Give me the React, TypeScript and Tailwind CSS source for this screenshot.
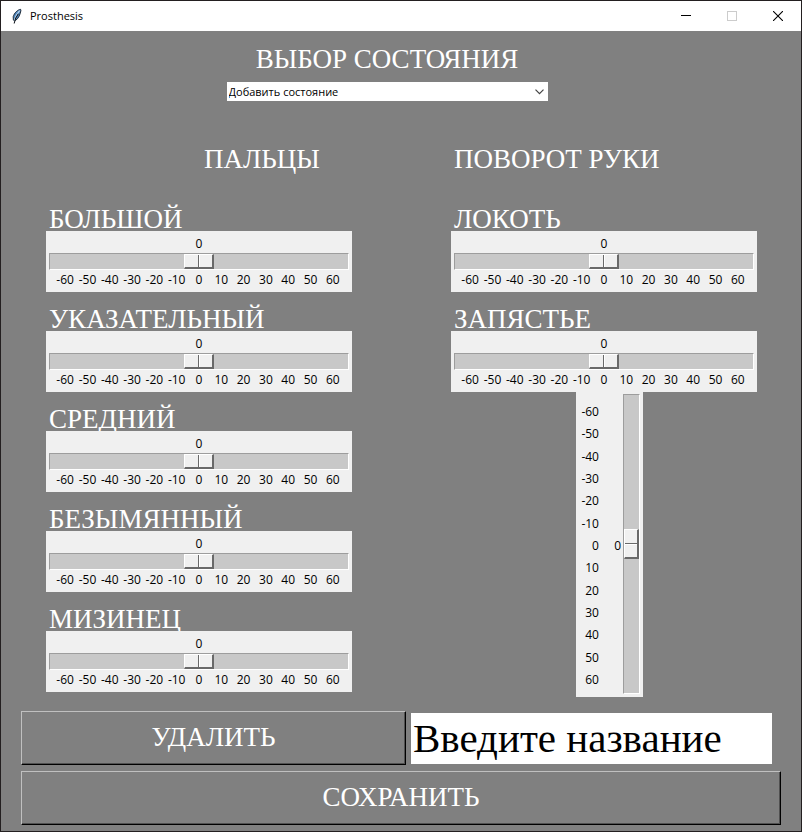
import { useState } from "react";

const TICKS = [-60, -50, -40, -30, -20, -10, 0, 10, 20, 30, 40, 50, 60];
const LIMIT = 60;

const UI_FONT = "font-['Open_Sans','Noto_Sans',sans-serif]";
const TRACK =
  "block appearance-none border border-t-[#9d9d9d] border-l-[#9d9d9d] border-r-white border-b-white bg-[#c8c8c8] outline-none";
const THUMB =
  "[&::-webkit-slider-thumb]:appearance-none [&::-webkit-slider-thumb]:border-t-1 [&::-webkit-slider-thumb]:border-l-1 [&::-webkit-slider-thumb]:border-r-2 [&::-webkit-slider-thumb]:border-b-2 [&::-webkit-slider-thumb]:border-t-white [&::-webkit-slider-thumb]:border-l-white [&::-webkit-slider-thumb]:border-r-[#696969] [&::-webkit-slider-thumb]:border-b-[#696969] [&::-webkit-slider-thumb]:bg-[#f0f0f0]";

function Scale({ id, label }: { id: string; label: string }) {
  const [value, setValue] = useState(0);
  return (
    <div className="flex flex-col">
      <label htmlFor={id} className="pl-[3px] text-[27px] leading-6 whitespace-nowrap text-white">
        {label}
      </label>
      <div className={`h-[61px] w-[306px] bg-[#f0f0f0] px-[3px] pt-1 text-xs text-black ${UI_FONT}`}>
        <div className="flex h-[18px] px-4 leading-[18px]">
          <span style={{ flexGrow: LIMIT + value }} />
          <output htmlFor={id} className="flex w-0 justify-center">
            {value}
          </output>
          <span style={{ flexGrow: LIMIT - value }} />
        </div>
        <input
          id={id}
          type="range"
          min={-LIMIT}
          max={LIMIT}
          value={value}
          onChange={(e) => setValue(Number(e.target.value))}
          className={`h-[17px] w-full ${TRACK} ${THUMB} [&::-webkit-slider-thumb]:h-[15px] [&::-webkit-slider-thumb]:w-[30px] [&::-webkit-slider-thumb]:bg-[linear-gradient(to_right,#f0f0f0_13px,#696969_13px,#696969_14px,#fff_14px,#fff_15px,#f0f0f0_15px)]`}
        />
        <div className="grid grid-cols-[repeat(13,minmax(0,1fr))] px-[5px] leading-5">
          {TICKS.map((t) => (
            <span key={t} className="flex justify-center">
              {t}
            </span>
          ))}
        </div>
      </div>
    </div>
  );
}

function VerticalScale() {
  const [value, setValue] = useState(0);
  return (
    <div className={`ml-[125px] flex h-[305px] w-[67px] justify-end bg-[#f0f0f0] py-[2px] pr-[3px] text-xs text-black ${UI_FONT}`}>
      <div className="grid w-6 grid-rows-[repeat(13,minmax(0,1fr))] pt-[7px] pb-1 text-right">
        {TICKS.map((t) => (
          <span key={t} className="flex items-center justify-end leading-4">
            {t}
          </span>
        ))}
      </div>
      <div className="flex w-[25px] flex-col items-end pt-[17px] pr-[2px] pb-[14px]">
        <span style={{ flexGrow: LIMIT + value }} />
        <output htmlFor="wrist-tilt" className="flex h-0 items-center">
          {value}
        </output>
        <span style={{ flexGrow: LIMIT - value }} />
      </div>
      <input
        id="wrist-tilt"
        aria-label="ЗАПЯСТЬЕ"
        type="range"
        min={-LIMIT}
        max={LIMIT}
        value={value}
        onChange={(e) => setValue(Number(e.target.value))}
        className={`h-[300px] w-[17px] [writing-mode:vertical-lr] ${TRACK} ${THUMB} [&::-webkit-slider-thumb]:h-[30px] [&::-webkit-slider-thumb]:w-[15px] [&::-webkit-slider-thumb]:bg-[linear-gradient(to_bottom,#f0f0f0_13px,#696969_13px,#696969_14px,#fff_14px,#fff_15px,#f0f0f0_15px)]`}
      />
    </div>
  );
}

function TitleBar() {
  return (
    <header className={`flex h-[30px] items-center bg-white pl-[10px] text-black ${UI_FONT}`}>
      <svg width="11" height="17" viewBox="0 0 12 18" aria-hidden="true">
        <path d="M10.5 1.2C7.5 1.4 3.6 5 2.4 9.2L2.6 13L5 13.2C8 11.5 10 7 10.8 2.6Z" fill="#4f86bd" stroke="#17202b" strokeWidth="1" />
        <path d="M9.4 2.6C6.8 5.5 4.6 9.5 3.6 13.4" fill="none" stroke="#b9d6ef" strokeWidth="1.4" />
        <path d="M8 6C5.6 9 4 12.5 3.4 16.6" fill="none" stroke="#0c1118" strokeWidth="1.1" />
      </svg>
      <h1 className="ml-2 flex-1 text-[11px] leading-4">Prosthesis</h1>
      <button aria-label="Minimize" className="flex h-full w-[46px] items-center justify-center">
        <svg width="10" height="10" viewBox="0 0 10 10" shapeRendering="crispEdges">
          <path d="M0 4.5H10" stroke="#000" />
        </svg>
      </button>
      <button aria-label="Maximize" disabled className="flex h-full w-[46px] items-center justify-center">
        <svg width="10" height="10" viewBox="0 0 10 10" shapeRendering="crispEdges">
          <path d="M.5 .5H9.5V9.5H.5Z" fill="none" stroke="#ccc" />
        </svg>
      </button>
      <button aria-label="Close" className="flex h-full w-[46px] items-center justify-center">
        <svg width="10" height="10" viewBox="0 0 10 10">
          <path d="M0 0L10 10M10 0L0 10" stroke="#000" strokeWidth="1.1" />
        </svg>
      </button>
    </header>
  );
}

const BUTTON =
  "h-[54px] border border-t-[#c0c0c0] border-l-[#c0c0c0] border-r-black border-b-black pb-[2px] text-[27px] leading-none text-white shadow-[inset_-1px_-1px_0_#505050]";

export default function App() {
  const [name, setName] = useState("Введите название");
  return (
    <div className="flex min-h-screen flex-col border border-[#231f20] bg-[#808080] font-['Liberation_Serif','Times_New_Roman',serif]">
      <TitleBar />
      <main className="flex flex-1 flex-col px-5 pb-[6px]">
        <section className="flex flex-col items-center pt-4 pr-7">
          <label htmlFor="state" className="text-[27px] leading-6 text-white">
            ВЫБОР СОСТОЯНИЯ
          </label>
          <div className="relative mt-[11px]">
            <select
              id="state"
              className={`block h-[19px] w-[321px] appearance-none bg-white px-[2px] text-[11px] leading-4 text-black outline-none ${UI_FONT}`}
            >
              <option>Добавить состояние</option>
            </select>
            <svg className="pointer-events-none absolute top-[7px] right-1" width="9" height="6" viewBox="0 0 9 6">
              <path d="M.5 .7L4.5 4.7L8.5 .7" fill="none" stroke="#444" strokeWidth="1.2" />
            </svg>
          </div>
        </section>

        <div className="flex justify-between gap-6 pt-[46px] pr-6 pl-[25px]">
          <section className="flex flex-col">
            <h2 className="mb-9 pl-[158px] text-[27px] leading-6 text-white">ПАЛЬЦЫ</h2>
            <div className="flex flex-col gap-[15px]">
              <Scale id="thumb" label="БОЛЬШОЙ" />
              <Scale id="index" label="УКАЗАТЕЛЬНЫЙ" />
              <Scale id="middle" label="СРЕДНИЙ" />
              <Scale id="ring" label="БЕЗЫМЯННЫЙ" />
              <Scale id="little" label="МИЗИНЕЦ" />
            </div>
          </section>
          <section className="flex flex-col">
            <h2 className="mb-9 pl-[3px] text-[27px] leading-6 whitespace-nowrap text-white">ПОВОРОТ РУКИ</h2>
            <div className="flex flex-col gap-[15px]">
              <Scale id="elbow" label="ЛОКОТЬ" />
              <Scale id="wrist" label="ЗАПЯСТЬЕ" />
            </div>
            <VerticalScale />
          </section>
        </div>

        <form className="mt-[14px] flex flex-col gap-[6px]" onSubmit={(e) => e.preventDefault()}>
          <div className="grid grid-cols-[385fr_361fr] items-center gap-[5px] pr-[9px]">
            <button type="button" className={BUTTON}>
              УДАЛИТЬ
            </button>
            <input
              aria-label="Название"
              value={name}
              onChange={(e) => setName(e.target.value)}
              className="h-[51px] w-full min-w-0 bg-white px-[2px] text-[41px] leading-none text-black outline-none"
            />
          </div>
          <button type="submit" className={BUTTON}>
            СОХРАНИТЬ
          </button>
        </form>
      </main>
    </div>
  );
}
